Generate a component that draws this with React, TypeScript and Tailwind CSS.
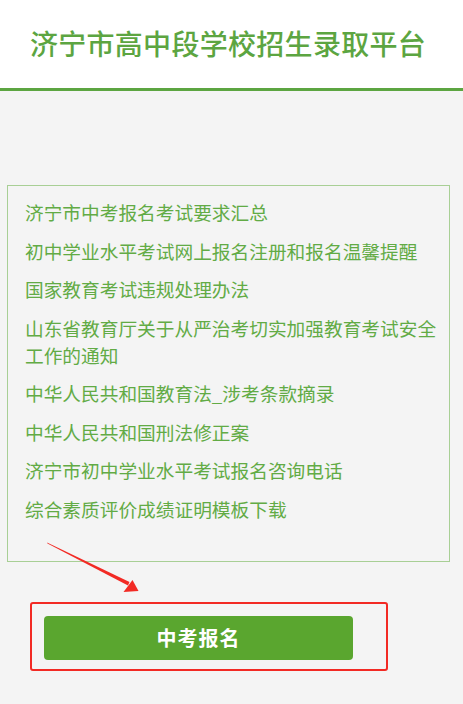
const links = [
  "济宁市中考报名考试要求汇总",
  "初中学业水平考试网上报名注册和报名温馨提醒",
  "国家教育考试违规处理办法",
  "山东省教育厅关于从严治考切实加强教育考试安全工作的通知",
  "中华人民共和国教育法_涉考条款摘录",
  "中华人民共和国刑法修正案",
  "济宁市初中学业水平考试报名咨询电话",
  "综合素质评价成绩证明模板下载",
];

const App = () => {
  return (
    <div
      className="relative min-h-[704px] bg-[#f4f4f4]"
      style={{ fontFamily: '"Noto Sans CJK SC", "Noto Sans", sans-serif' }}
    >
      {/* Header */}
      <header className="h-[91px] bg-white border-b-[3px] border-[#5ca541] flex items-center justify-center">
        <h1 className="text-[28px] font-medium text-[#5ca541] tracking-[0.3px] mt-[-2px] mr-[7px]">
          济宁市高中段学校招生录取平台
        </h1>
      </header>

      {/* Link list */}
      <div className="ml-[7px] mr-[13px] mt-[94px] h-[377px] border border-[#a8cf95] pl-[17px] pr-[6px] pt-[12px]">
        <ul className="flex flex-col gap-[11.5px]">
          {links.map((t) => (
            <li key={t} className="text-[18.7px] leading-[27px] text-[#62ab45]">
              <a href="#">{t}</a>
            </li>
          ))}
        </ul>
      </div>

      {/* Button */}
      <div className="ml-[30px] mt-[40px] w-[358px] h-[69px] border-2 border-[#f22a24] rounded-[3px] pl-[12px] pt-[12px]">
        <button className="w-[309px] h-[44px] bg-[#5aa62f] rounded-[4px] text-white text-[20px] font-bold tracking-[1px]">
          中考报名
        </button>
      </div>

      {/* Annotation arrow */}
      <svg className="absolute left-0 top-0 pointer-events-none" width="463" height="704">
        <polygon points="47,542.5 47.5,543.5 128,585.5 129.5,582" fill="#f22a24" />
        <polygon points="138.5,591 123.5,592 132.5,580" fill="#f22a24" />
      </svg>
    </div>
  );
};

export default App;
